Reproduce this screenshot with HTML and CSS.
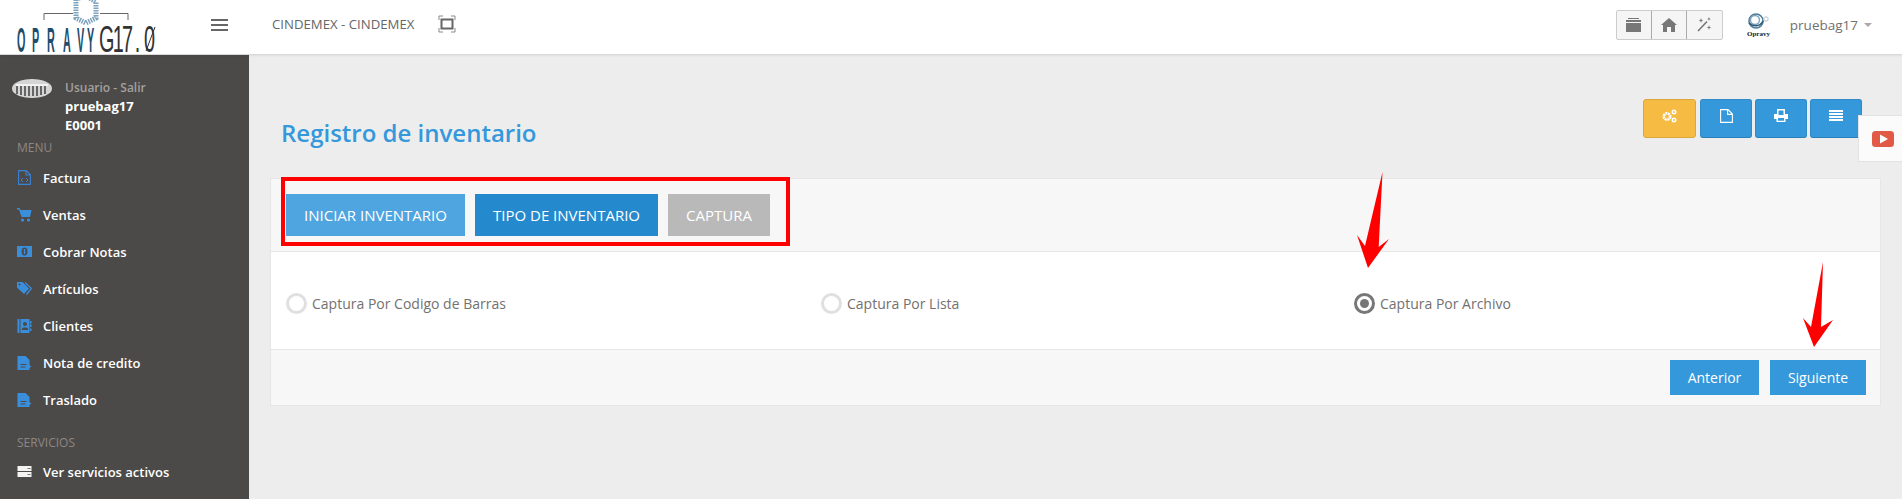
FILE: index.html
```html
<!DOCTYPE html>
<html lang="en">
<head>
  <meta charset="UTF-8" />
  <title>Registro de inventario</title>
  <link rel="stylesheet" href="styles.css">
</head>
<body>

  <!-- Top bar -->
  <header class="topbar">
    <div class="logo">
      <svg class="logo-svg" width="170" height="54" viewBox="0 0 170 54">
        <path d="M44 20V13.5H73M100 13.5H128V20" fill="none" stroke="#666" stroke-width="1"/>
        <path d="M76 -1L86 -4L96 2V18L86 23L76 18Z" fill="none" stroke="#7ea3bd" stroke-width="5" stroke-dasharray="1.5 1"/>
        <text class="logo-text logo-blue" transform="translate(0 51.5) scale(.3 1)" x="57 107 157 210 257 290">OPRAVY</text>
        <text class="logo-text logo-dark" transform="translate(0 51.5) scale(.55 1)" x="180 205 222 245 262">G17.0</text>
        <path d="M146 51L155 27" stroke="#333" stroke-width="1"/>
      </svg>
    </div>
    <button class="menu-toggle" aria-label="Menu"><span></span><span></span><span></span></button>
    <div class="company">CINDEMEX - CINDEMEX</div>
    <svg class="fullscreen" width="18" height="18" viewBox="0 0 18 18">
      <path d="M1 5V1H5M13 1H17V5M17 13V17H13M5 17H1V13" fill="none" stroke="#8a8a8a" stroke-width="1"/>
      <rect x="3.5" y="4.5" width="11" height="9" fill="none" stroke="#666" stroke-width="2"/>
    </svg>

    <div class="topbar-right">
      <div class="btn-group">
        <button aria-label="Archivo">
          <svg width="15" height="14" viewBox="0 0 15 14"><path d="M2 0H13V1H2ZM0 2H15V4H0ZM0 5H15V14H0Z" fill="#777"/></svg>
        </button>
        <button aria-label="Inicio">
          <svg width="16" height="14" viewBox="0 0 16 14"><path d="M8 0L16 7H14V14H10V9H6V14H2V7H0Z" fill="#777"/></svg>
        </button>
        <button aria-label="Herramientas">
          <svg width="15" height="15" viewBox="0 0 15 15"><path d="M1 14L10 4.5" stroke="#777" stroke-width="1.6"/><path d="M4 1L4.7 3L6.5 3.5L4.7 4L4 6L3.3 4L1.5 3.5L3.3 3ZM12 0L12.5 1.5L14 2L12.5 2.5L12 4L11.5 2.5L10 2L11.5 1.5ZM12 8L12.6 10L14.5 10.5L12.6 11L12 13L11.4 11L9.5 10.5L11.4 10Z" fill="#777"/></svg>
        </button>
      </div>
      <svg class="brand-mark" width="27" height="24" viewBox="0 0 27 24">
        <circle cx="11" cy="8" r="7" fill="none" stroke="#4d7c99" stroke-width="1.6"/>
        <circle cx="10" cy="7" r="4.5" fill="none" stroke="#7ea3bd" stroke-width="1.4"/>
        <path d="M4 10C8 14 15 14 18 8" fill="none" stroke="#2c5a78" stroke-width="1.6"/>
        <circle cx="21" cy="6" r="2.2" fill="none" stroke="#b5c3cd" stroke-width="1"/>
        <text x="13.5" y="22.5" text-anchor="middle" class="brand-mark-text">Opravy</text>
      </svg>
      <span class="username">pruebag17</span>
      <span class="caret"></span>
    </div>
  </header>

  <div class="layout">
    <!-- Sidebar -->
    <aside class="sidebar">
      <div class="user">
        <svg class="user-pic" width="40" height="19" viewBox="0 0 40 19">
          <ellipse cx="20" cy="9.5" rx="20" ry="9.5" fill="#d5d5d5"/>
          <path d="M5 7V15M9 7V16M13 7V17M17 7V17M21 7V17M25 7V17M29 7V16M33 7V15" stroke="#4a4a4a" stroke-width="1.6"/>
          <path d="M4 6H36" stroke="#fff" stroke-width="1.4"/>
        </svg>
        <div class="user-info">
          <div class="user-link">Usuario - Salir</div>
          <div class="user-name">pruebag17</div>
          <div class="user-name">E0001</div>
        </div>
      </div>

      <div class="nav-title nav-title-menu">MENU</div>
      <ul class="nav">
        <li>
          <svg width="15" height="15" viewBox="0 0 13 15"><path d="M.6.6H8.2L12.4 4.8V14.4H.6ZM8 .6V5H12.4" fill="none" stroke="#3a82d4" stroke-width="1.1"/><path d="M5 8L3 10L5 12M8 8L10 10L8 12" fill="none" stroke="#3a82d4" stroke-width="1"/></svg>
          Factura
        </li>
        <li>
          <svg width="15" height="15" viewBox="0 0 15 15"><path d="M0 1H2.5L3.5 3H14.5L13 10H4.5L2 2.5H0Z" fill="#3a8fdc"/><circle cx="5.5" cy="13" r="1.6" fill="#3a8fdc"/><circle cx="11.5" cy="13" r="1.6" fill="#3a8fdc"/></svg>
          Ventas
        </li>
        <li>
          <svg width="15" height="11" viewBox="0 0 15 11"><path d="M0 0H15V11H0Z" fill="#3a8fdc"/><ellipse cx="7.5" cy="5.5" rx="3" ry="4" fill="#4c4a48"/><rect x="6.8" y="3" width="1.4" height="5" fill="#3a8fdc"/></svg>
          Cobrar Notas
        </li>
        <li>
          <svg width="15" height="13" viewBox="0 0 15 13"><path d="M0 0H5.5L12 6.5L7 12L0 5.5Z" fill="#3a8fdc"/><path d="M8 0.5L14.5 6.5L9.5 12.5" fill="none" stroke="#3a8fdc" stroke-width="1.2"/><circle cx="2.5" cy="2.5" r="1" fill="#4c4a48"/></svg>
          Artículos
        </li>
        <li>
          <svg width="14" height="14" viewBox="0 0 14 14"><path d="M0 0H2V14H0ZM3 0H12V14H3ZM12.5 2H14V4.5H12.5ZM12.5 5.5H14V8H12.5ZM12.5 9.5H14V12H12.5Z" fill="#3a8fdc"/><circle cx="7.5" cy="5" r="2" fill="#4c4a48"/><path d="M4.5 11V9.5C4.5 8 10.5 8 10.5 9.5V11Z" fill="#4c4a48"/></svg>
          Clientes
        </li>
        <li>
          <svg width="14" height="14" viewBox="0 0 14 14"><path d="M0 0H8L12 4V14H0Z" fill="#3a8fdc"/><path d="M3 8.5H9M3 11H8" stroke="#4c4a48" stroke-width="1"/><path d="M10 8L14 10.5L10 13Z" fill="#3a8fdc"/></svg>
          Nota de credito
        </li>
        <li>
          <svg width="14" height="14" viewBox="0 0 14 14"><path d="M0 0H8L12 4V14H0Z" fill="#3a8fdc"/><path d="M3 8.5H9M3 11H8" stroke="#4c4a48" stroke-width="1"/><path d="M10 8L14 10.5L10 13Z" fill="#3a8fdc"/></svg>
          Traslado
        </li>
      </ul>

      <div class="nav-title nav-title-services">SERVICIOS</div>
      <ul class="nav nav-services">
        <li>
          <svg width="14" height="11" viewBox="0 0 14 11"><path d="M0 0H14V5H0ZM0 6H14V11H0Z" fill="#f4f4f4"/><path d="M10 2.5H13M10 8.5H13" stroke="#777" stroke-width="1"/></svg>
          Ver servicios activos
        </li>
      </ul>
    </aside>

    <!-- Main content -->
    <main class="content">
      <div class="page-head">
        <h1>Registro de inventario</h1>
        <div class="actions">
          <button class="action action-yellow" aria-label="Ajustes">
            <svg width="15" height="14" viewBox="0 0 15 14"><circle cx="5" cy="7.5" r="3.2" fill="none" stroke="#fff" stroke-width="2.6" stroke-dasharray="2 .6"/><circle cx="12" cy="3" r="1.7" fill="none" stroke="#fff" stroke-width="1.6"/><circle cx="12" cy="11" r="1.7" fill="none" stroke="#fff" stroke-width="1.6"/></svg>
          </button>
          <button class="action" aria-label="Nuevo">
            <svg width="13" height="14" viewBox="0 0 13 14"><path d="M.6.6H8L12.4 5V13.4H.6ZM7.6.6V5.4H12.4" fill="none" stroke="#fff" stroke-width="1.1"/></svg>
          </button>
          <button class="action" aria-label="Imprimir">
            <svg width="14" height="13" viewBox="0 0 14 13"><path d="M3 0H11V5H14V10H11.5V13H2.5V10H0V5H3ZM4.5 1.5V6H9.5V1.5ZM4 9V11.8H10V9Z" fill="#fff" fill-rule="evenodd"/></svg>
          </button>
          <button class="action" aria-label="Lista">
            <svg width="14" height="11" viewBox="0 0 14 11"><path d="M0 0H14V2H0ZM0 3H14V5H0ZM0 6H14V8H0ZM0 9H14V11H0Z" fill="#fff"/></svg>
          </button>
        </div>
      </div>

      <section class="panel">
        <div class="panel-head">
          <div class="tabs">
            <button class="tab tab-done">INICIAR INVENTARIO</button>
            <button class="tab tab-active">TIPO DE INVENTARIO</button>
            <button class="tab tab-off">CAPTURA</button>
          </div>
          <div class="highlight"></div>
        </div>
        <div class="panel-body">
          <label class="radio"><span class="radio-dot"></span>Captura Por Codigo de Barras</label>
          <label class="radio"><span class="radio-dot"></span>Captura Por Lista</label>
          <label class="radio"><span class="radio-dot radio-on"></span>Captura Por Archivo</label>
        </div>
        <div class="panel-foot">
          <button class="step-btn">Anterior</button>
          <button class="step-btn">Siguiente</button>
        </div>
      </section>
    </main>
  </div>

  <!-- Video tab on the right edge -->
  <div class="video-tab">
    <svg width="22" height="16" viewBox="0 0 22 16"><rect width="22" height="16" rx="3.5" fill="#e05a45"/><path d="M8 3.5L16 8L8 12.5Z" fill="#fff"/></svg>
  </div>

  <!-- Red arrows drawn on top of the capture -->
  <svg class="arrow arrow-one" width="33" height="97" viewBox="0 0 33 97"><path d="M25.5 0L21.7 75L32 67L11 96L0 63L8 74Z" fill="#f00"/></svg>
  <svg class="arrow arrow-two" width="30" height="86" viewBox="0 0 30 86"><path d="M20 0L18 65L30 58L11 85L0 56L8 65Z" fill="#f00"/></svg>

</body>
</html>
```

FILE: styles.css
```css
/* Reset & basics */
* {
  box-sizing: border-box;
}
html, body {
  height: 100%;
}
body {
  margin: 0;
  background: #ededed;
  color: #73716f;
  font-family: 'Open Sans', 'Liberation Sans', sans-serif;
  font-size: 13px;
  overflow: hidden;
}
button {
  font-family: inherit;
  border: none;
  cursor: pointer;
}
ul {
  list-style: none;
  margin: 0;
  padding: 0;
}

/* Top bar */
.topbar {
  display: flex;
  align-items: center;
  height: 55px;
  background: #fff;
  border-bottom: 1px solid #d9d9d9;
  box-shadow: 0 1px 2px rgba(0,0,0,0.06);
  position: relative;
  z-index: 2;
}
.logo {
  width: 170px;
  height: 54px;
}
.logo-svg {
  display: block;
  overflow: visible;
}
.logo-text {
  font-family: 'Liberation Sans', sans-serif;
  font-size: 36px;
}
.logo-blue {
  fill: #1d4d6d;
  font-weight: 700;
}
.logo-dark {
  fill: #333;
}
.menu-toggle {
  display: flex;
  flex-direction: column;
  gap: 3px;
  width: 17px;
  padding: 0;
  margin-left: 41px;
  margin-top: -5px;
  background: none;
}
.menu-toggle span {
  height: 2px;
  background: #666;
  display: block;
  width: 100%;
}
.company {
  margin-left: 44px;
  margin-top: -6px;
  font-size: 13.2px;
  color: #666;
}
.fullscreen {
  margin-left: 24px;
  margin-top: -6px;
}
.topbar-right {
  margin-left: auto;
  display: flex;
  align-items: center;
  margin-right: 30px;
  margin-top: -5px;
}
.btn-group {
  display: flex;
  height: 30px;
  border: 1px solid #ccc;
  border-radius: 2px;
  background: #f5f5f5;
}
.btn-group button {
  width: 35px;
  display: flex;
  align-items: center;
  justify-content: center;
  padding: 0;
  background: none;
  border-right: 1px solid #aaa;
}
.btn-group button:last-child {
  border-right: none;
}
.brand-mark {
  margin-left: 22px;
}
.brand-mark-text {
  font-family: 'Liberation Serif', serif;
  font-size: 7px;
  font-weight: 700;
  fill: #222;
}
.username {
  margin-left: 18px;
  font-size: 13.5px;
  color: #73716f;
}
.caret {
  margin-left: 6px;
  width: 0;
  height: 0;
  border-left: 4px solid transparent;
  border-right: 4px solid transparent;
  border-top: 4px solid #aaa;
}

/* Page layout */
.layout {
  display: flex;
  height: 444px;
}

/* Sidebar */
.sidebar {
  width: 249px;
  flex-shrink: 0;
  background: #4c4a48;
  color: #fff;
  padding-top: 23px;
  font-size: 13px;
}
.user {
  display: flex;
  padding-left: 12px;
}
.user-pic {
  margin-top: 1px;
}
.user-info {
  margin-left: 13px;
  font-size: 13px;
  line-height: 19px;
}
.user-link {
  color: #a3a09e;
  font-weight: 600;
  font-size: 12px;
}
.user-name {
  font-weight: 700;
}
.nav-title {
  padding-left: 17px;
  color: #8c8784;
  font-size: 12px;
  line-height: 16px;
}
.nav-title-menu {
  margin-top: 5px;
}
.nav-title-services {
  margin-top: 17px;
}
.nav {
  margin-top: 3px;
}
.nav-services {
  margin-top: 2px;
}
.nav li {
  height: 37px;
  display: flex;
  align-items: center;
  padding-left: 17px;
  font-weight: 600;
  font-size: 13px;
  position: relative;
}
.nav li svg {
  width: 26px;
  flex-shrink: 0;
  padding-right: 11px;
}

/* Main content */
.content {
  flex: 1;
  min-width: 0;
  padding: 44px 21px 0 21px;
}
.page-head {
  display: flex;
  justify-content: space-between;
  align-items: flex-end;
  height: 39px;
  padding-left: 11px;
}
.page-head h1 {
  margin: 0 0 -11px;
  font-size: 24px;
  line-height: 32px;
  font-weight: 600;
  color: #3498db;
}
.actions {
  display: flex;
  gap: 3px;
  margin-right: 19px;
}
.action {
  width: 52px;
  height: 39px;
  padding: 0;
  display: flex;
  align-items: center;
  justify-content: center;
  padding-bottom: 6px;
  background: #3498db;
  border: 1px solid #2f8ac6;
  border-bottom-color: #2a7fb8;
  border-radius: 3px;
}
.action-yellow {
  width: 53px;
  margin-right: 1px;
  background: #f6bb42;
  border-color: #dca73a;
}

/* Panel */
.panel {
  margin-top: 40px;
  background: #fff;
  border: 1px solid #e6e6e6;
}
.panel-head {
  position: relative;
  height: 73px;
  background: #f7f7f7;
  border-bottom: 1px solid #e6e6e6;
  padding: 15px 0 0 15px;
}
.tabs {
  display: flex;
  gap: 10px;
}
.tab {
  height: 42px;
  padding: 0;
  color: #fff;
  font-size: 15px;
}
.tab-done {
  width: 179px;
  background: #4fa5e0;
}
.tab-active {
  width: 183px;
  background: #2589cd;
}
.tab-off {
  width: 102px;
  background: #b9b9b9;
}
.highlight {
  position: absolute;
  left: 10px;
  top: -2px;
  width: 509px;
  height: 69px;
  border: 4px solid #f00;
  pointer-events: none;
}
.panel-body {
  display: grid;
  grid-template-columns: 535px 533px 1fr;
  align-items: center;
  height: 97px;
  padding-left: 15px;
  padding-top: 6px;
}
.radio {
  display: flex;
  align-items: center;
  gap: 5px;
  font-size: 14px;
  color: #73716f;
}
.radio-dot {
  width: 21px;
  height: 21px;
  border: 3px solid #e0e0e0;
  border-radius: 50%;
  display: flex;
  align-items: center;
  justify-content: center;
}
.radio-on {
  border-color: #777;
}
.radio-on::after {
  content: "";
  width: 9px;
  height: 9px;
  background: #777;
  border-radius: 50%;
}
.panel-foot {
  display: flex;
  justify-content: flex-end;
  gap: 11px;
  height: 56px;
  padding: 10px 14px 0 0;
  background: #f7f7f7;
  border-top: 1px solid #e6e6e6;
}
.step-btn {
  height: 35px;
  padding: 0;
  width: 89px;
  background: #3498db;
  color: #fff;
  font-size: 14px;
}
.step-btn:last-child {
  width: 96px;
}

/* Floating pieces */
.video-tab {
  position: absolute;
  left: 1858px;
  top: 115px;
  width: 44px;
  height: 47px;
  background: #fbfbfb;
  border: 1px solid #e3e3e3;
  border-right: none;
  display: flex;
  align-items: center;
  justify-content: center;
  padding-left: 4px;
}
.arrow {
  position: absolute;
  z-index: 3;
}
.arrow-one {
  left: 1357px;
  top: 172px;
}
.arrow-two {
  left: 1803px;
  top: 262px;
}
```
